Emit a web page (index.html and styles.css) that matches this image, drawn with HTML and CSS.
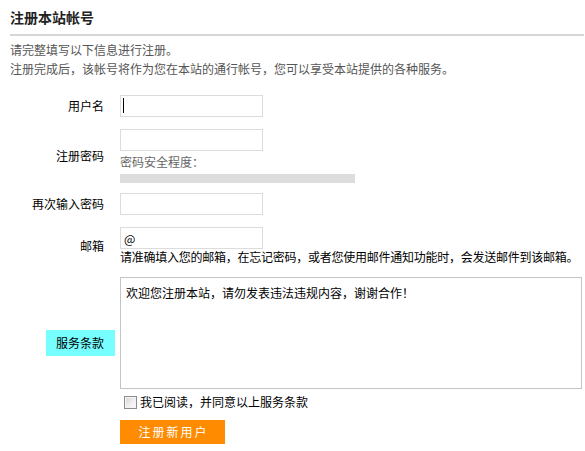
FILE: index.html
```html
<!DOCTYPE html>
<html lang="zh-CN">
<head>
<meta charset="utf-8">
<title>注册本站帐号</title>
<link rel="stylesheet" href="styles.css">
</head>
<body>
<div class="page">
  <h2 class="title">注册本站帐号</h2>
  <div class="intro">
    <p>请完整填写以下信息进行注册。</p>
    <p>注册完成后，该帐号将作为您在本站的通行帐号，您可以享受本站提供的各种服务。</p>
  </div>
  <form class="form">
    <div class="row row-user">
      <div class="label-cell"><span class="label">用户名</span></div>
      <div class="field">
        <div class="input-wrap"><input class="text-input" type="text"><span class="caret"></span></div>
      </div>
    </div>
    <div class="row row-pass">
      <div class="label-cell"><span class="label">注册密码</span></div>
      <div class="field">
        <input class="text-input" type="password">
        <div class="strength-text">密码安全程度：</div>
        <div class="strength-bar"></div>
      </div>
    </div>
    <div class="row row-repass">
      <div class="label-cell"><span class="label">再次输入密码</span></div>
      <div class="field">
        <input class="text-input" type="password">
      </div>
    </div>
    <div class="row row-mail">
      <div class="label-cell"><span class="label">邮箱</span></div>
      <div class="field">
        <input class="text-input" type="text" value="@">
        <div class="hint">请准确填入您的邮箱，在忘记密码，或者您使用邮件通知功能时，会发送邮件到该邮箱。</div>
      </div>
    </div>
    <div class="row row-terms">
      <div class="label-cell"><span class="label label-terms">服务条款</span></div>
      <div class="field">
        <textarea class="terms" readonly>欢迎您注册本站，请勿发表违法违规内容，谢谢合作！</textarea>
        <label class="agree"><input class="check" type="checkbox"><span>我已阅读，并同意以上服务条款</span></label>
      </div>
    </div>
    <div class="row row-submit">
      <div class="label-cell"></div>
      <div class="field">
        <button class="submit" type="button">注册新用户</button>
      </div>
    </div>
  </form>
</div>
</body>
</html>
```
FILE: styles.css
```css
html, body {
  margin: 0;
  padding: 0;
  background: #fff;
}
body {
  font-family: "Noto Sans CJK SC", "Noto Sans", sans-serif;
  font-size: 12px;
  color: #000;
}
.page {
  box-sizing: border-box;
  width: 585px;
  padding-left: 10px;
  padding-right: 1px;
}
.title {
  margin: 0;
  padding: 8px 0 8px 0;
  font-size: 14px;
  line-height: 18px;
  font-weight: bold;
  color: #222;
  border-bottom: 2px solid #d6d6d6;
}
.intro {
  margin-top: 4px;
  color: #555;
}
.intro p {
  margin: 0;
  line-height: 19px;
}
.form {
  margin-top: 17px;
}
.row {
  display: flex;
  align-items: center;
}
.label-cell {
  width: 105px;
  flex: none;
  display: flex;
  justify-content: flex-end;
  margin-right: 5px;
}
.label {
  display: inline-block;
  padding: 0 11px 0 10px;
  line-height: 12px;
  white-space: nowrap;
}
.label-terms {
  padding-top: 7px;
  padding-bottom: 7px;
  background: #77fefe;
}
.field {
  flex: 1;
  min-width: 0;
  display: flex;
  flex-direction: column;
  align-items: flex-start;
}
.input-wrap {
  position: relative;
}
.text-input {
  box-sizing: border-box;
  width: 143px;
  height: 22px;
  margin: 0;
  padding: 0 3px;
  border: 1px solid #dcdcdc;
  font-family: inherit;
  font-size: 12px;
  color: #000;
  outline: none;
  display: block;
}
.caret {
  position: absolute;
  left: 3px;
  top: 3px;
  width: 1px;
  height: 15px;
  background: #000;
}
.row-user {
  margin-bottom: 12px;
}
.row-pass {
  margin-bottom: 10px;
}
.strength-text {
  margin-top: 4px;
  line-height: 14px;
  color: #666;
}
.strength-bar {
  margin-top: 5px;
  width: 235px;
  height: 9px;
  background: #dddddd;
}
.row-repass {
  margin-bottom: 12px;
}
.hint {
  line-height: 14px;
  margin-top: 1px;
  letter-spacing: -0.25px;
  white-space: nowrap;
}
.row-mail {
  margin-bottom: 13px;
}
.terms {
  box-sizing: border-box;
  width: 462px;
  height: 112px;
  margin: 0;
  padding: 8px 5px;
  border: 1px solid #c4c4c4;
  font-family: inherit;
  font-size: 12px;
  line-height: 14px;
  color: #000;
  resize: none;
  outline: none;
  display: block;
}
.agree {
  display: flex;
  align-items: center;
  margin-top: 6px;
  line-height: 14px;
}
.check {
  appearance: none;
  -webkit-appearance: none;
  box-sizing: border-box;
  width: 13px;
  height: 13px;
  margin: 0 3px 0 4px;
  border: 1px solid #8c8c8c;
  background: linear-gradient(135deg, #d6d6d6 0%, #f0f0f0 60%, #ffffff 100%);
  box-shadow: inset 0 0 0 1px #f4f4f4;
}
.row-terms {
  margin-bottom: 11px;
}
.submit {
  width: 105px;
  height: 24px;
  margin: 0;
  padding: 0;
  border: none;
  background: #ff8c00;
  color: #fff;
  font-family: inherit;
  font-size: 12px;
  line-height: 24px;
  letter-spacing: 2px;
  text-indent: 2px;
  cursor: pointer;
}
```
